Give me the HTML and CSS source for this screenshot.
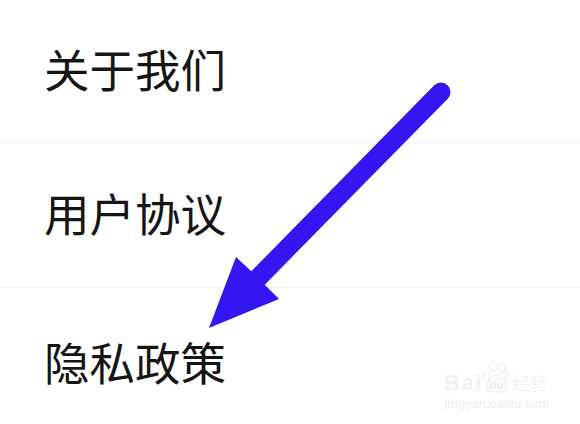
FILE: index.html
```html
<!DOCTYPE html>
<html lang="zh">
<head>
<meta charset="utf-8">
<title>设置</title>
<link rel="stylesheet" href="styles.css">
</head>
<body>
<div class="page">
  <ul class="menu">
    <li class="row row-first">关于我们</li>
    <li class="row">用户协议</li>
    <li class="row row-last">隐私政策</li>
  </ul>
  <svg class="arrow" viewBox="0 0 580 424" aria-hidden="true">
    <path class="arrow-shaft" d="M441 92L258 278"/>
    <path class="arrow-head" d="M209 328L236 257L252 272L264 284L279 299Z"/>
  </svg>
  <div class="mark">
    <div class="mark-top">
      <span class="mark-bai">Bai</span>
      <svg class="mark-paw" viewBox="0 0 30 34" aria-hidden="true">
        <g class="mark-shape">
          <ellipse cx="5" cy="17" rx="3.4" ry="4.6"/>
          <ellipse cx="12" cy="6.5" rx="4" ry="5.5"/>
          <ellipse cx="21" cy="8" rx="3.6" ry="5"/>
          <ellipse cx="26.500" cy="17" rx="3" ry="4.4"/>
          <path d="M15 15C10 15 9 20 6 24C3 29 7 33 12 32C14 31.500 17 31.500 19 32C24 33 28 29 25 24C22 20 20 15 15 15Z"/>
        </g>
        <text class="mark-du" x="15.500" y="29">du</text>
      </svg>
      <span class="mark-cn">经验</span>
    </div>
    <div class="mark-url">jingyan.baidu.com</div>
  </div>
</div>
</body>
</html>
```
FILE: styles.css
```css
* {
  box-sizing: border-box;
}

html,
body {
  margin: 0;
  padding: 0;
  background: #fff;
}

.page {
  position: relative;
  width: 580px;
  height: 424px;
  overflow: hidden;
  background: #fff;
}

.menu {
  list-style: none;
  margin: 0;
  padding: 0;
  display: flex;
  flex-direction: column;
}

.row {
  height: 145px;
  padding: 0 0 4px 44px;
  display: flex;
  align-items: center;
  border-bottom: 1px solid #f1f1f1;
  font-family: "Noto Sans CJK SC", "Liberation Sans", sans-serif;
  font-size: 45.5px;
  line-height: 1;
  color: #151515;
}

.row-first {
  height: 143px;
}

.row-last {
  height: 136px;
  padding-top: 0;
  align-items: flex-end;
  padding-bottom: 40px;
  border-bottom: 0;
}

.arrow {
  position: absolute;
  left: 0;
  top: 0;
  width: 580px;
  height: 424px;
}

.arrow-shaft {
  fill: none;
  stroke: #3316f2;
  stroke-width: 19px;
  stroke-linecap: round;
}

.arrow-head {
  fill: #3316f2;
}

.mark {
  position: absolute;
  left: 444px;
  top: 360px;
  width: 104px;
  display: flex;
  flex-direction: column;
  color: #f2f2f2;
}

.mark-top {
  display: flex;
  align-items: flex-end;
  height: 34px;
}

.mark-bai {
  width: 37px;
  font-family: "Liberation Sans", sans-serif;
  font-size: 22px;
  font-weight: 700;
  line-height: 23px;
  letter-spacing: 1.5px;
}

.mark-paw {
  width: 30px;
  height: 34px;
  flex: none;
}

.mark-shape {
  fill: #fbfbfb;
  stroke: #eeeeee;
  stroke-width: 1;
}

.mark-du {
  font-family: "Liberation Sans", sans-serif;
  font-size: 11px;
  font-weight: 700;
  text-anchor: middle;
  fill: #eeeeee;
}

.mark-cn {
  margin-left: 2px;
  font-family: "Noto Sans CJK SC", sans-serif;
  font-size: 17px;
  line-height: 23px;
  white-space: nowrap;
}

.mark-url {
  margin-top: 3px;
  font-family: "Liberation Sans", sans-serif;
  font-size: 12px;
  font-weight: 700;
  line-height: 14px;
  white-space: nowrap;
}
```
